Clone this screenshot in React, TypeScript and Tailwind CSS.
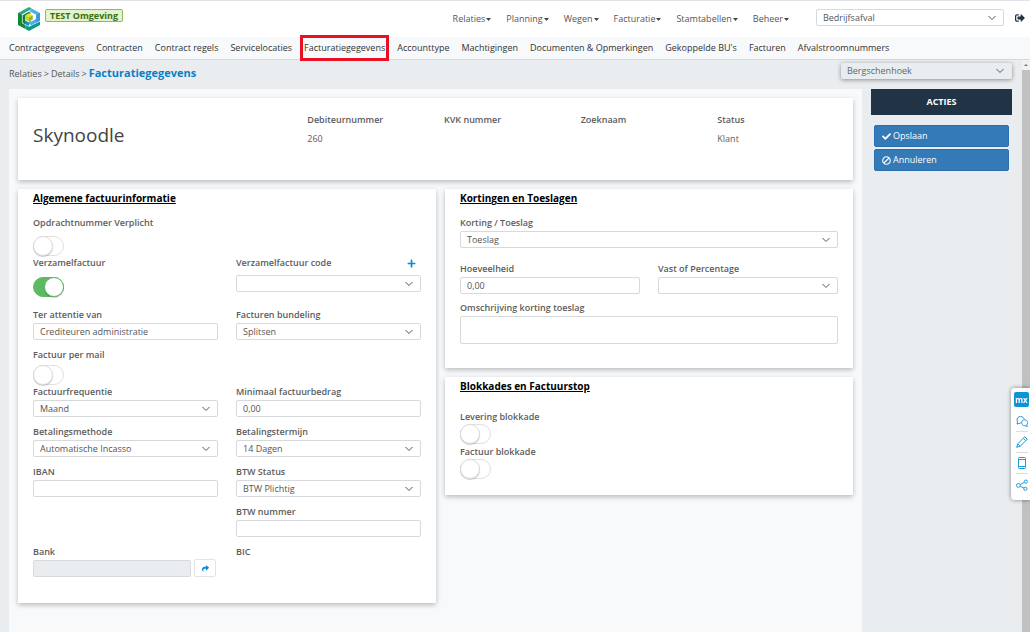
import React from 'react';
import { FaBan, FaCheck, FaPlus, FaShare, FaSignOutAlt } from 'react-icons/fa';

const mainMenu = ['Relaties', 'Planning', 'Wegen', 'Facturatie', 'Stamtabellen', 'Beheer'];

const tabs = [
  'Contractgegevens',
  'Contracten',
  'Contract regels',
  'Servicelocaties',
  'Facturatiegegevens',
  'Accounttype',
  'Machtigingen',
  'Documenten & Opmerkingen',
  'Gekoppelde BU\'s',
  'Facturen',
  'Afvalstroomnummers',
];

const control =
  'block w-full h-[17px] rounded-xs border border-[#d7d9dc] bg-white px-1.5 text-[9px] leading-[13px] text-[#555] outline-none disabled:bg-[#e9edf0]';

const Chevron: React.FC = () => (
  <svg
    viewBox="0 0 8 5"
    className="pointer-events-none absolute right-2 top-1/2 h-[5px] w-2 -translate-y-1/2"
    fill="none"
    stroke="#555"
  >
    <path d="M0.5 0.5 L4 4 L7.5 0.5" />
  </svg>
);

interface FieldProps {
  id: string;
  label: string;
  value?: string;
}

const Label: React.FC<{ id: string; children: React.ReactNode }> = ({ id, children }) => (
  <label htmlFor={id} className="block text-[9px] font-semibold leading-3 text-[#5c5c5c]">
    {children}
  </label>
);

const TextField: React.FC<FieldProps> = ({ id, label, value = '' }) => (
  <div className="flex flex-col gap-0.5">
    <Label id={id}>{label}</Label>
    <input id={id} type="text" defaultValue={value} className={control} />
  </div>
);

const Select: React.FC<{ id: string; value?: string }> = ({ id, value = '' }) => (
  <div className="relative">
    <select id={id} defaultValue={value} className={`${control} appearance-none`}>
      <option value={value}>{value}</option>
    </select>
    <Chevron />
  </div>
);

const SelectField: React.FC<FieldProps> = ({ id, label, value }) => (
  <div className="flex flex-col gap-0.5">
    <Label id={id}>{label}</Label>
    <Select id={id} value={value} />
  </div>
);

interface ToggleProps {
  id: string;
  label: string;
  on?: boolean;
  gap?: string;
}

const Toggle: React.FC<ToggleProps> = ({ id, label, on = false, gap = 'gap-[7px]' }) => (
  <div className={`flex flex-col ${gap}`}>
    <Label id={id}>{label}</Label>
    <input
      id={id}
      type="checkbox"
      role="switch"
      defaultChecked={on}
      className="flex h-5 w-[31px] appearance-none rounded-full border border-[#e0e0e0] bg-white before:-my-px before:-ml-px before:block before:h-5 before:w-5 before:rounded-full before:border before:border-[#dcdcdc] before:bg-white before:shadow-[0_1px_1px_rgba(0,0,0,0.2)] checked:justify-end checked:border-[#5fb962] checked:bg-[#5fb962] checked:before:-mr-px checked:before:border-[#5fb962]"
    />
  </div>
);

const Card: React.FC<{ title: string; className: string; children: React.ReactNode }> = ({
  title,
  className,
  children,
}) => (
  <section className={`bg-white px-[15px] pt-[3px] shadow-[0_2px_5px_rgba(0,0,0,0.25)] ${className}`}>
    <h2 className="text-[10px] font-bold leading-[13px] text-black underline">{title}</h2>
    {children}
  </section>
);

const Logo: React.FC = () => (
  <svg viewBox="0 0 22 24" className="h-6 w-[22px]">
    <path d="M0 6 L11 0 L14 1.7 L3.8 7.6 V16 L0 18 Z" fill="#2fa88a" />
    <path d="M0 6 L3.8 7.9 V16 L7.4 18 V22 L0 18 Z" fill="#0f8a2e" />
    <path d="M14 1.7 L22 6 V13.6 L13.4 18.2 L11 16.9 V13.4 L13.4 14.4 L18.2 11.8 V7.8 L11 4 Z" fill="#4db0ee" />
    <path d="M18.2 7.8 L22 6 V13.6 L18.2 15.7 Z" fill="#3a97e0" />
    <path d="M7.4 18 L11 19.8 L22 14.4 V18 L11 24 L7.4 22 Z" fill="#0a9a86" />
    <path d="M4.6 8.2 L11 4.8 L13 5.9 L7 9.2 V17.2 L4.6 15.8 Z" fill="#0c7f4c" />
    <path d="M7 13.2 L11 15.4 V19 L7 17.2 Z" fill="#1a8bc4" />
    <path d="M11 6.2 L14.8 8.2 L11 10.2 L7.2 8.2 Z" fill="#e6e02a" />
    <path d="M7.2 8.2 L11 10.2 V14.4 L7.2 12.4 Z" fill="#c3d324" />
    <path d="M14.8 8.2 L11 10.2 V14.4 L14.8 12.4 Z" fill="#8fbb22" />
  </svg>
);

const Header: React.FC = () => (
  <header className="flex h-[37px] items-start border-t border-[#e1e3e8] bg-white pl-[18px] pr-[5px] text-[#555]">
    <div className="flex flex-1 gap-[5px] pt-1.5">
      <Logo />
      <span className="mt-0.5 h-[13px] rounded-xs border border-[#8dbb5c] bg-[#e2f3cd] px-1 text-[9px] font-bold leading-[11px] text-[#3c6e0c]">
        TEST Omgeving
      </span>
    </div>
    <nav className="flex gap-[15px] pt-3">
      {mainMenu.map((item) => (
        <button key={item} type="button" className="flex items-center gap-px text-[9px] leading-3">
          {item}
          <svg viewBox="0 0 5 3" className="h-[3px] w-[5px]" fill="#444">
            <path d="M0 0 H5 L2.5 3 Z" />
          </svg>
        </button>
      ))}
    </nav>
    <div className="ml-[27px] w-[188px] pt-2">
      <div className="relative">
        <select aria-label="Afvalsoort" className={`${control} appearance-none`}>
          <option>Bedrijfsafval</option>
        </select>
        <Chevron />
      </div>
    </div>
    <button type="button" aria-label="Uitloggen" className="ml-[11px] mt-3 text-[#1f3347]">
      <FaSignOutAlt className="h-[10px] w-[10px]" />
    </button>
  </header>
);

const TabBar: React.FC = () => (
  <nav className="flex h-[23px] items-center gap-3 border-b border-[#d5d9dd] bg-[#f8f9fb] pl-[9px] text-[9px] leading-3 text-[#333]">
    {tabs.map((tab) => (
      <a
        key={tab}
        href="#"
        className={`whitespace-nowrap ${
          tab === 'Facturatiegegevens' ? '-mx-1 border-[3px] border-[#e81123] px-px py-1' : ''
        }`}
      >
        {tab}
      </a>
    ))}
  </nav>
);

const CustomerCard: React.FC = () => (
  <section className="grid h-[82px] grid-cols-6 bg-white pl-[15px] pt-4 shadow-[0_2px_5px_rgba(0,0,0,0.25)]">
    <h1 className="col-span-2 pt-[9px] text-[19px] leading-6 text-[#444]">Skynoodle</h1>
    {[
      ['Debiteurnummer', '260'],
      ['KVK nummer', ''],
      ['Zoeknaam', ''],
      ['Status', 'Klant'],
    ].map(([name, value]) => (
      <dl key={name} className="pl-px text-[9px] leading-3 text-[#5c5c5c]">
        <dt className="font-semibold">{name}</dt>
        <dd className="mt-[7px]">{value}</dd>
      </dl>
    ))}
  </section>
);

const InvoiceCard: React.FC = () => (
  <Card title="Algemene factuurinformatie" className="h-[414px]">
    <div className="mt-3">
      <Toggle id="opdracht" label="Opdrachtnummer Verplicht" />
    </div>
    <div className="mt-px grid grid-cols-2 gap-x-[18px]">
      <Toggle id="verzamel" label="Verzamelfactuur" on gap="gap-2" />
      <div className="flex flex-col gap-1.5">
        <div className="flex justify-between pr-[5px]">
          <Label id="code">Verzamelfactuur code</Label>
          <button type="button" aria-label="Code toevoegen" className="text-[#0a8ad8]">
            <FaPlus className="h-[9px] w-[9px]" />
          </button>
        </div>
        <Select id="code" />
      </div>
    </div>
    <div className="mt-3 grid grid-cols-2 gap-x-[18px]">
      <TextField id="attentie" label="Ter attentie van" value="Crediteuren administratie" />
      <SelectField id="bundeling" label="Facturen bundeling" value="Splitsen" />
    </div>
    <div className="mt-[9px]">
      <Toggle id="mail" label="Factuur per mail" gap="gap-1" />
    </div>
    <div className="mt-px grid grid-cols-2 gap-x-[18px] gap-y-[9px]">
      <SelectField id="frequentie" label="Factuurfrequentie" value="Maand" />
      <TextField id="minimaal" label="Minimaal factuurbedrag" value="0,00" />
      <SelectField id="methode" label="Betalingsmethode" value="Automatische Incasso" />
      <SelectField id="termijn" label="Betalingstermijn" value="14 Dagen" />
      <TextField id="iban" label="IBAN" />
      <SelectField id="btwstatus" label="BTW Status" value="BTW Plichtig" />
      <div className="col-start-2">
        <TextField id="btwnummer" label="BTW nummer" />
      </div>
      <div className="flex flex-col gap-px">
        <Label id="bank">Bank</Label>
        <div className="flex items-center gap-[3px] pr-0.5">
          <input id="bank" type="text" disabled className={`${control} flex-1`} />
          <button
            type="button"
            aria-label="Bank openen"
            className="flex h-[18px] w-[22px] items-center justify-center rounded-xs border border-[#e2e4e7] bg-white text-[#0a8ad8]"
          >
            <FaShare className="h-[7px] w-[7px]" />
          </button>
        </div>
      </div>
      <span className="text-[9px] font-semibold leading-3 text-[#5c5c5c]">BIC</span>
    </div>
  </Card>
);

const DiscountCard: React.FC = () => (
  <Card title="Kortingen en Toeslagen" className="h-[179px]">
    <div className="mt-3">
      <SelectField id="korting" label="Korting / Toeslag" value="Toeslag" />
    </div>
    <div className="mt-[15px] grid grid-cols-2 gap-x-[18px]">
      <TextField id="hoeveelheid" label="Hoeveelheid" value="0,00" />
      <SelectField id="vast" label="Vast of Percentage" />
    </div>
    <div className="mt-2 flex flex-col gap-0.5">
      <Label id="omschrijving">Omschrijving korting toeslag</Label>
      <textarea
        id="omschrijving"
        className="block h-7 w-full resize-none rounded-xs border border-[#d7d9dc] bg-white px-1.5 text-[9px] text-[#555]"
      />
    </div>
  </Card>
);

const BlockCard: React.FC = () => (
  <Card title="Blokkades en Factuurstop" className="h-[118px]">
    <div className="mt-[18px] flex flex-col gap-0.5">
      <Toggle id="levering" label="Levering blokkade" gap="gap-px" />
      <Toggle id="factuurblok" label="Factuur blokkade" gap="gap-px" />
    </div>
  </Card>
);

const Actions: React.FC = () => (
  <aside className="w-[141px]">
    <h2 className="bg-[#203445] text-center text-[9px] font-bold leading-[26px] text-white">ACTIES</h2>
    <div className="mt-2.5 flex flex-col gap-0.5 px-[3px]">
      <button
        type="button"
        className="flex h-[22px] items-center gap-0.5 rounded-xs border border-[#2a6fb0] bg-[#337ab7] px-[7px] text-[9px] text-white"
      >
        <FaCheck className="h-[9px] w-[9px]" />
        Opslaan
      </button>
      <button
        type="button"
        className="flex h-[22px] items-center gap-0.5 rounded-xs border border-[#2a6fb0] bg-[#337ab7] px-[7px] text-[9px] text-white"
      >
        <FaBan className="h-[9px] w-[9px] -scale-x-100" />
        Annuleren
      </button>
    </div>
  </aside>
);

const Scrollbar: React.FC = () => (
  <div className="flex w-2 flex-col bg-[#f1f1f1]">
    <div className="flex h-[10px] items-center justify-center">
      <svg viewBox="0 0 4 2" className="h-0.5 w-1" fill="#777">
        <path d="M0 2 L2 0 L4 2 Z" />
      </svg>
    </div>
    <div className="flex-1 bg-[#c1c1c1]" />
  </div>
);

// Feedback widget, floats over the right edge of the page
const FeedbackBar: React.FC = () => (
  <div className="fixed right-0 top-[388px] flex h-28 w-[19px] flex-col items-center rounded-l-sm bg-white pl-0.5 pt-1 text-[#1a9bdc] shadow-[0_0_4px_rgba(0,0,0,0.45)]">
    <span className="flex h-[15px] w-[15px] items-center justify-center rounded-xs bg-[#0e93d8] text-[8px] font-bold leading-none text-white">
      mx
    </span>
    <div className="flex flex-col items-center divide-y divide-[#dcdcdc] pt-1">
      <button type="button" aria-label="Chat" className="flex h-[21px] items-center">
        <svg viewBox="0 0 12 12" className="h-3 w-3" fill="none" stroke="currentColor">
          <path d="M4.8 8 L1 9 L1.6 7 A3.6 3.6 0 1 1 8 3.8" />
          <path d="M10.6 10 A3 3 0 1 0 8.6 10.7 L11.5 11.4 Z" />
        </svg>
      </button>
      <button type="button" aria-label="Bewerken" className="flex h-[21px] items-center">
        <svg viewBox="0 0 12 12" className="h-3 w-3" fill="none" stroke="currentColor">
          <path d="M0.7 11.3 L1.7 7.8 L8.8 0.8 L11.2 3.2 L4.2 10.3 Z M7.4 2.2 L9.8 4.6 M1.7 7.8 L4.2 10.3" />
        </svg>
      </button>
      <button type="button" aria-label="Mobiel" className="flex h-[21px] items-center">
        <svg viewBox="0 0 12 12" className="h-3 w-3" fill="none" stroke="currentColor">
          <rect x="2.5" y="0.5" width="7" height="11" rx="1" />
          <path d="M2.5 2.5 H9.5 M2.5 9.5 H9.5" />
        </svg>
      </button>
      <button type="button" aria-label="Delen" className="flex h-[21px] items-center">
        <svg viewBox="0 0 12 12" className="h-3 w-3" fill="none" stroke="currentColor">
          <circle cx="2.4" cy="6.4" r="1.9" />
          <circle cx="9.8" cy="2.6" r="1.6" />
          <circle cx="9.4" cy="9.8" r="1.6" />
          <path d="M4.2 5.5 L8.3 3.4 M4.2 7.3 L8 9.1" />
        </svg>
      </button>
    </div>
  </div>
);

export default function App() {
  return (
    <div className="flex min-h-screen flex-col bg-[#e9edf0] font-['Open_Sans',sans-serif]">
      <Header />
      <TabBar />
      <div className="flex flex-1">
        <div className="flex flex-1 flex-col pl-[9px] pr-[10px]">
          <div className="flex h-[29px] items-start justify-between">
            <div className="flex items-baseline gap-0.5 pt-1.5 text-[9px] leading-[14px] text-[#555]">
              <a href="#">Relaties</a>
              <span>&gt;</span>
              <a href="#">Details</a>
              <span>&gt;</span>
              <span className="text-[11px] font-bold text-[#0a7fc7]">Facturatiegegevens</span>
            </div>
            <div className="relative mt-[3px] w-[171px]">
              <select
                aria-label="Vestiging"
                className="block h-4 w-full appearance-none rounded-xs bg-[#e9edf0] px-1.5 text-[9px] text-[#666] shadow-[0_1px_4px_rgba(0,0,0,0.4)]"
              >
                <option>Bergschenhoek</option>
              </select>
              <Chevron />
            </div>
          </div>
          <div className="flex flex-1 gap-[9px]">
            <main className="flex-1 bg-[#f8f9fb] p-[9px]">
              <CustomerCard />
              <div className="mt-[9px] grid grid-cols-[418fr_408fr] items-start gap-[9px]">
                <InvoiceCard />
                <div className="flex flex-col gap-[9px]">
                  <DiscountCard />
                  <BlockCard />
                </div>
              </div>
            </main>
            <Actions />
          </div>
        </div>
        <Scrollbar />
      </div>
      <FeedbackBar />
    </div>
  );
}
